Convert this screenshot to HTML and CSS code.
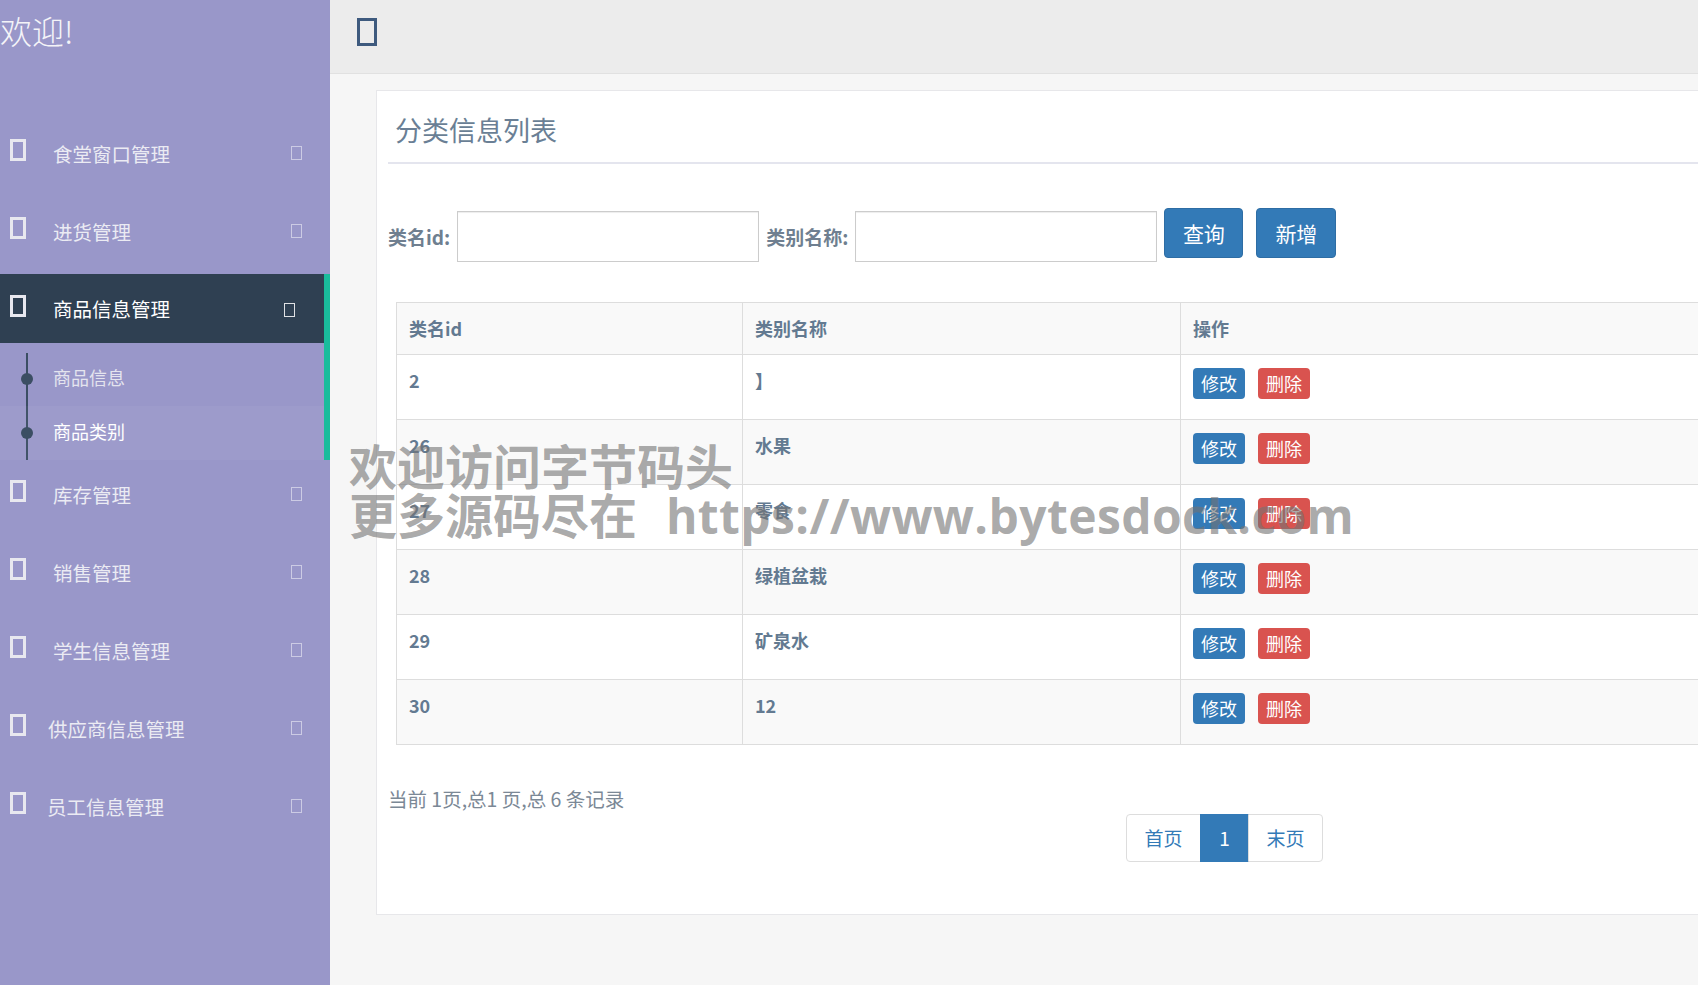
FILE: index.html
```html
<!DOCTYPE html>
<html>
<head>
  <meta charset="utf-8">
  <title>分类信息列表</title>
  <link rel="stylesheet" href="styles.css">
</head>
<body>
<div class="app">
  <aside class="sidebar">
    <div class="welcome">欢迎!</div>
    <ul class="menu">
      <li><a><i class="ico"></i><span class="label">食堂窗口管理</span><i class="arrow"></i></a></li>
      <li><a><i class="ico"></i><span class="label">进货管理</span><i class="arrow"></i></a></li>
      <li class="active">
        <a><i class="ico"></i><span class="label">商品信息管理</span><i class="arrow"></i></a>
        <ul class="sub">
          <li><span class="dot"></span>商品信息</li>
          <li class="current"><span class="dot"></span>商品类别</li>
        </ul>
      </li>
      <li><a><i class="ico"></i><span class="label">库存管理</span><i class="arrow"></i></a></li>
      <li><a><i class="ico"></i><span class="label">销售管理</span><i class="arrow"></i></a></li>
      <li><a><i class="ico"></i><span class="label">学生信息管理</span><i class="arrow"></i></a></li>
      <li><a><i class="ico"></i><span class="label tight">供应商信息管理</span><i class="arrow"></i></a></li>
      <li><a><i class="ico"></i><span class="label tighter">员工信息管理</span><i class="arrow"></i></a></li>
    </ul>
  </aside>

  <div class="main">
    <div class="topbar"><i class="ico-top"></i></div>
    <div class="content">
      <div class="panel">
        <h2 class="panel-title">分类信息列表</h2>

        <div class="search">
          <label>类名id:</label>
          <input type="text">
          <label>类别名称:</label>
          <input type="text">
          <button class="btn">查询</button>
          <button class="btn btn-new">新增</button>
        </div>

        <table class="list">
          <colgroup>
            <col class="c1"><col class="c2"><col>
          </colgroup>
          <thead>
            <tr><th>类名id</th><th>类别名称</th><th>操作</th></tr>
          </thead>
          <tbody>
            <tr><td>2</td><td>】</td><td><span class="ops"><a class="op edit">修改</a><a class="op del">删除</a></span></td></tr>
            <tr><td>26</td><td>水果</td><td><span class="ops"><a class="op edit">修改</a><a class="op del">删除</a></span></td></tr>
            <tr><td>27</td><td>零食</td><td><span class="ops"><a class="op edit">修改</a><a class="op del">删除</a></span></td></tr>
            <tr><td>28</td><td>绿植盆栽</td><td><span class="ops"><a class="op edit">修改</a><a class="op del">删除</a></span></td></tr>
            <tr><td>29</td><td>矿泉水</td><td><span class="ops"><a class="op edit">修改</a><a class="op del">删除</a></span></td></tr>
            <tr><td>30</td><td>12</td><td><span class="ops"><a class="op edit">修改</a><a class="op del">删除</a></span></td></tr>
          </tbody>
        </table>

        <div class="pageinfo">当前 1页,总1 页,总 6 条记录</div>
        <ul class="pager">
          <li><a>首页</a></li>
          <li class="on"><a>1</a></li>
          <li><a>末页</a></li>
        </ul>
      </div>
    </div>
  </div>

  <div class="watermark">
    <div>欢迎访问字节码头</div>
    <div>更多源码尽在 <span class="url">https://www.bytesdock.com</span></div>
  </div>
</div>
</body>
</html>
```

FILE: styles.css
```css
html, body {
  margin: 0;
  padding: 0;
}
body {
  font-family: "Noto Sans CJK SC", "Liberation Sans", sans-serif;
  overflow: hidden;
}
ul {
  list-style: none;
  margin: 0;
  padding: 0;
}

.app {
  display: flex;
  height: 985px;
  position: relative;
}

/* sidebar */
.sidebar {
  width: 330px;
  flex: none;
  background: #9997c9;
  color: #ececf4;
}
.welcome {
  height: 114px;
  box-sizing: border-box;
  padding-top: 10px;
  font-size: 32px;
  line-height: 40px;
  font-weight: 300;
  color: #f4f4f8;
}
.menu > li > a {
  display: flex;
  align-items: center;
  height: 78px;
  padding: 0 28px 0 10px;
  font-size: 19.5px;
  color: #ebebf3;
}
.ico {
  width: 16px;
  height: 22px;
  box-sizing: border-box;
  border: 3px solid #e8e8ef;
  margin-bottom: 6px;
  flex: none;
}
.label {
  flex: 1;
  margin-left: 27px;
}
.label.tight {
  margin-left: 22px;
}
.label.tighter {
  margin-left: 21px;
}
.arrow {
  width: 11px;
  height: 14px;
  box-sizing: border-box;
  border: 1.5px solid rgba(255, 255, 255, 0.5);
  flex: none;
}
.menu > li.active {
  margin: 4px 0 -5px;
  border-right: 6px solid #1abc9c;
}
.menu > li.active > a {
  height: 69px;
  background: #2f4052;
  color: #fff;
  padding-right: 29px;
}
.menu > li.active .arrow {
  border-color: rgba(255, 255, 255, 0.85);
  margin-top: 2px;
}

.sub {
  position: relative;
  padding-top: 9px;
}
.sub::before {
  content: "";
  position: absolute;
  left: 26px;
  top: 10px;
  bottom: 0;
  width: 2px;
  background: #3b4e63;
}
.sub li {
  display: flex;
  align-items: center;
  height: 54px;
  box-sizing: border-box;
  padding: 0 0 4px 53px;
  font-size: 18px;
  color: #e4e4ee;
  position: relative;
}
.sub li.current {
  color: #fff;
  background: rgba(255, 255, 255, 0.04);
}
.dot {
  position: absolute;
  left: 21px;
  top: 21px;
  width: 12px;
  height: 12px;
  border-radius: 50%;
  background: #3b4e63;
}

/* main area */
.main {
  flex: 1;
  min-width: 0;
  background: #f6f6f6;
  overflow: hidden;
}
.topbar {
  height: 74px;
  box-sizing: border-box;
  background: #ececec;
  border-bottom: 1px solid #e1e1e1;
  padding: 18px 0 0 27px;
}
.ico-top {
  display: block;
  width: 20px;
  height: 28px;
  box-sizing: border-box;
  border: 3px solid #3e5a7e;
}
.content {
  padding: 16px 0 0 46px;
}
.panel {
  width: 1700px;
  box-sizing: border-box;
  background: #fff;
  border: 1px solid #e7e7ea;
  padding: 0 13px 52px 11px;
  color: #647a90;
}
.panel-title {
  margin: 0;
  padding: 21px 7px 14px;
  font-size: 27px;
  line-height: 36px;
  font-weight: 400;
  color: #6a7f95;
  border-bottom: 2px solid #e4e5ee;
}

.search {
  display: flex;
  align-items: flex-start;
  margin-top: 44px;
}
.search label {
  margin-top: 3px;
  line-height: 51px;
  font-size: 19px;
  font-weight: 700;
  color: #6f7f90;
  margin-right: 7px;
}
.search input {
  width: 302px;
  height: 51px;
  box-sizing: border-box;
  margin: 3px 7px 0 0;
  border: 1px solid #cccccc;
  box-shadow: inset 0 1px 1px rgba(0, 0, 0, 0.075);
  font-size: 18px;
}
.btn {
  width: 79px;
  height: 50px;
  border: 1px solid #2e6da4;
  border-radius: 4px;
  background: #337ab7;
  color: #fff;
  font-family: inherit;
  font-size: 21px;
  padding: 0;
}
.btn-new {
  margin-left: 13px;
  width: 80px;
}

/* table */
.list {
  width: calc(100% - 16px);
  margin: 40px 8px 0;
  border-collapse: collapse;
  table-layout: fixed;
  font-size: 18px;
  font-weight: 700;
  color: #637a91;
}
.list col.c1 { width: 346px; }
.list col.c2 { width: 438px; }
.list th, .list td {
  border: 1px solid #dddddd;
  text-align: left;
  vertical-align: top;
  padding: 13px 12px;
  line-height: 25px;
}
.list thead tr {
  background: #f9f9f9;
}
.list tbody tr {
  height: 65px;
}
.list tbody tr:nth-child(even) {
  background: #f9f9f9;
}
.ops {
  display: flex;
  gap: 13px;
}
.op {
  display: inline-block;
  width: 52px;
  height: 31px;
  line-height: 31px;
  text-align: center;
  border-radius: 4px;
  color: #fff;
  font-weight: 400;
  font-size: 18px;
}
.op.edit {
  background: #337ab7;
}
.op.del {
  background: #d9534f;
}

.pageinfo {
  margin-top: 42px;
  font-size: 19.5px;
  line-height: 24px;
  color: #7b8896;
}
.pager {
  display: flex;
  justify-content: center;
  margin-top: 3px;
}
.pager li a {
  display: block;
  height: 48px;
  box-sizing: border-box;
  line-height: 46px;
  padding: 0;
  width: 75px;
  text-align: center;
  border: 1px solid #dddddd;
  margin-left: -1px;
  font-size: 19px;
  color: #337ab7;
}
.pager li:first-child a {
  border-radius: 4px 0 0 4px;
}
.pager li:last-child a {
  border-radius: 0 4px 4px 0;
}
.pager li.on a {
  width: 49px;
  background: #337ab7;
  border-color: #337ab7;
  color: #fff;
}

/* watermark overlay */
.watermark {
  position: absolute;
  left: 349px;
  top: 440px;
  font-size: 48px;
  line-height: 49px;
  font-weight: 700;
  color: rgba(115, 115, 115, 0.62);
  white-space: nowrap;
  pointer-events: none;
}
.watermark .url {
  font-family: "Open Sans", "Liberation Sans", sans-serif;
  margin-left: 18px;
  letter-spacing: 0.4px;
}
```
